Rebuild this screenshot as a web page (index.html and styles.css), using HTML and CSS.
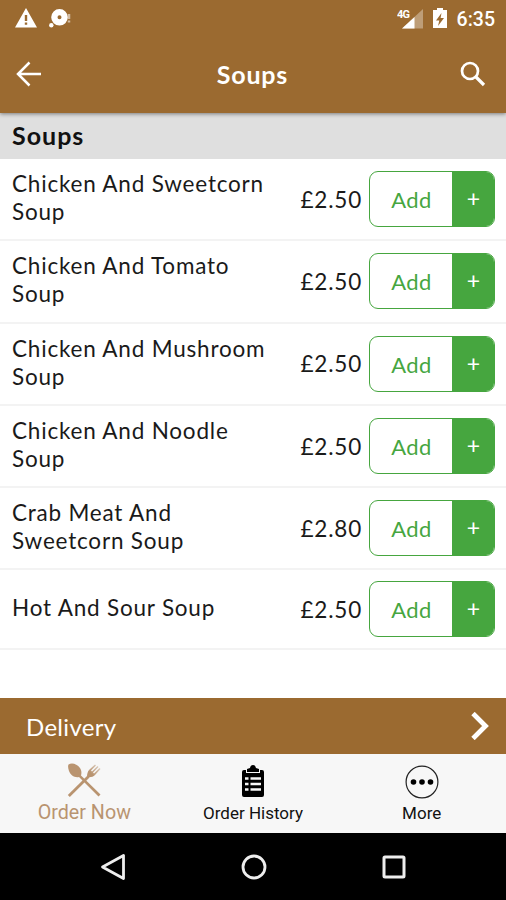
FILE: index.html
```html
<!DOCTYPE html>
<html lang="en">
<head>
<meta charset="utf-8">
<title>Soups</title>
<link rel="stylesheet" href="styles.css">
</head>
<body>
<header class="header">
  <div class="status">
    <svg class="status-warn" width="22" height="20" viewBox="0 0 22 20"><path fill="#fff" fill-rule="evenodd" d="M11 0 22 19.500H0zM9.800 7v6h2.400V7zm0 7.500v2.300h2.400v-2.300z"/></svg>
    <svg class="status-disc" width="22" height="19" viewBox="0 0 22 19"><path fill="#fff" fill-rule="evenodd" d="M10.500 0a8.300 8.300 0 1 1 0 16.600 8.300 8.300 0 0 1 0-16.600zm0 6.300a2 2 0 1 0 0 4 2 2 0 0 0 0-4z"/><circle cx="2.300" cy="16.200" r="2.200" fill="#fff"/><path d="M20 5v5m0 1.500v2" stroke="#fff" stroke-width="2.500" opacity=".55"/></svg>
    <span class="status-right">
      <svg width="28" height="22" viewBox="0 0 28 22"><path d="M26 1v19.500H5z" fill="#fff" opacity=".35"/><path d="M17.500 9v11.500H5z" fill="#fff"/><text class="net" x="0" y="9.500">4G</text></svg>
      <svg class="battery" width="14" height="21" viewBox="0 0 14 21"><path fill="#fff" fill-rule="evenodd" d="M4 0h6v2h4v18H0V2h4zM8.500 5 3 12.500h3.300L5 18l6-8H7.600z"/></svg>
      <span class="clock">6:35</span>
    </span>
  </div>
  <div class="bar">
    <svg width="26" height="26" viewBox="0 0 26 26"><path d="M25 13H2M13.500 1.500 2 13l11.500 11.500" fill="none" stroke="#fff" stroke-width="2.500"/></svg>
    <h1 class="title">Soups</h1>
    <svg width="26" height="26" viewBox="0 0 26 26"><circle cx="10" cy="10" r="8" fill="none" stroke="#fff" stroke-width="2.700"/><path d="m15.500 15.500 8.500 8.500" stroke="#fff" stroke-width="3.200"/></svg>
  </div>
</header>
<main class="menu">
  <h2 class="section">Soups</h2>
  <ul class="list">
    <li class="row"><span class="name">Chicken And Sweetcorn Soup</span><span class="price">£2.50</span><button class="add"><span class="label">Add</span><span class="plus">+</span></button></li>
    <li class="row"><span class="name">Chicken And Tomato Soup</span><span class="price">£2.50</span><button class="add"><span class="label">Add</span><span class="plus">+</span></button></li>
    <li class="row"><span class="name">Chicken And Mushroom Soup</span><span class="price">£2.50</span><button class="add"><span class="label">Add</span><span class="plus">+</span></button></li>
    <li class="row"><span class="name">Chicken And Noodle Soup</span><span class="price">£2.50</span><button class="add"><span class="label">Add</span><span class="plus">+</span></button></li>
    <li class="row"><span class="name">Crab Meat And Sweetcorn Soup</span><span class="price">£2.80</span><button class="add"><span class="label">Add</span><span class="plus">+</span></button></li>
    <li class="row row-single"><span class="name">Hot And Sour Soup</span><span class="price">£2.50</span><button class="add"><span class="label">Add</span><span class="plus">+</span></button></li>
  </ul>
</main>
<div class="delivery"><span>Delivery</span>
  <svg width="18" height="28" viewBox="0 0 18 28"><path d="m2 1.500 12.500 12.500L2 26.500" fill="none" stroke="#fff" stroke-width="4.800"/></svg>
</div>
<nav class="tabs">
  <a class="tab tab-active">
    <svg width="34" height="34" viewBox="0 0 34 34"><defs><linearGradient id="fade" x1="0" y1="1" x2="1" y2="0"><stop offset=".3" stop-color="#b99470"/><stop offset="1" stop-color="#b99470" stop-opacity=".3"/></linearGradient></defs><path fill="#b99470" d="M1.500 1.500C5-.5 10 1 13 5c1.500 2.300 1.800 5 1 7.500L33.500 31.500 31.500 33.500 12 14C7.500 15 3.500 12 2 8 1 5 .8 3 1.500 1.500z"/><path fill="#b99470" d="M.8 32 20.500 12.500l2 2L2.800 34z"/><path fill="url(#fade)" d="M20 14c0-3 .5-5.500 2.500-7.500L28 1.500l1 1-5 5 1 1L30.500 3l1 1L26 9.500l1 1L32.500 5l1 1-5.500 6c-2 2-4.500 2.500-8 2z"/></svg>
    <span>Order Now</span>
  </a>
  <a class="tab">
    <svg width="22" height="32" viewBox="0 0 22 32"><path fill="#000" d="M2 5h2v3h14V5h2q2 0 2 2v23q0 2-2 2H2q-2 0-2-2V7q0-2 2-2zM5 4l3-1q.5-3 3-3t3 3l3 1v3H5z"/><path d="M3 13.500h3.500m2 0h10.500m-16 5.500h3.500m2 0h10.500m-16 5.500h3.500m2 0h10.500" stroke="#f7f7f7" stroke-width="2.500"/></svg>
    <span>Order History</span>
  </a>
  <a class="tab">
    <svg width="34" height="34" viewBox="0 0 34 34"><circle cx="17" cy="17" r="15.900" fill="none" stroke="#222" stroke-width="1.200"/><circle cx="8.500" cy="17" r="2.800"/><circle cx="17" cy="17" r="2.800"/><circle cx="25.500" cy="17" r="2.800"/></svg>
    <span>More</span>
  </a>
</nav>
<footer class="system">
  <svg width="26" height="28" viewBox="0 0 26 28"><path d="M23.500 2.500v23L2.500 14z" fill="none" stroke="#eee" stroke-width="2.800" stroke-linejoin="round"/></svg>
  <svg width="26" height="26" viewBox="0 0 26 26"><circle cx="13" cy="13" r="11" fill="none" stroke="#eee" stroke-width="2.800"/></svg>
  <svg width="24" height="24" viewBox="0 0 24 24"><rect x="2" y="2" width="20" height="20" rx="1" fill="none" stroke="#eee" stroke-width="3"/></svg>
</footer>
</body>
</html>
```
FILE: styles.css
```css
* { box-sizing: border-box; }
body {
  margin: 0;
  height: 900px;
  display: flex;
  flex-direction: column;
  overflow: hidden;
  background: #fff;
  color: #1a1a1a;
  font-family: Lato, sans-serif;
}
svg { display: block; flex: none; }
.header {
  position: relative;
  height: 113px;
  background: #9b6a30;
  color: #fff;
  box-shadow: 0 1px 4px rgba(0, 0, 0, .45);
}
.status { display: flex; height: 37px; padding: 8px 11px 0 15px; }
.status-disc { margin: 1px 0 0 12px; }
.status-right { display: flex; margin-left: auto; }
.net { font: 700 11px Roboto, sans-serif; fill: #fff; letter-spacing: -.8px; }
.battery { margin-left: 8px; }
.clock { margin-left: 10px; font: 500 19.5px/24px Roboto, sans-serif; }
.bar {
  display: flex;
  align-items: center;
  justify-content: space-between;
  height: 76px;
  padding: 0 20px 2px 16px;
}
.title { margin: 0; padding-left: 3px; font-size: 25px; line-height: 28px; font-weight: 700; letter-spacing: .8px; }
.section {
  margin: 0;
  height: 46px;
  padding: 0 12px;
  background: #dfdfdf;
  color: #111;
  font-size: 25px;
  line-height: 44px;
  font-weight: 700;
  letter-spacing: 1px;
}
.menu { flex: 1; }
.list { margin: 0; padding: 0; list-style: none; }
.row {
  display: flex;
  align-items: center;
  height: 82.3px;
  padding: 0 11px 0 12px;
  border-bottom: 2px solid #f3f3f3;
}
.row-single { height: 80px; }
.name { width: 262px; padding-bottom: 2px; font-size: 22.500px; line-height: 28px; letter-spacing: .8px; }
.price { width: 88px; text-align: right; font-size: 22.500px; letter-spacing: .8px; }
.add {
  display: flex;
  width: 126px;
  height: 56px;
  margin-left: 7px;
  padding: 0;
  overflow: hidden;
  border: 1px solid #46a63f;
  border-radius: 9px;
  background: #fff;
  font: 22px Lato, sans-serif;
  letter-spacing: .4px;
  color: #46a63f;
}
.label { flex: 1; padding-left: 1px; line-height: 55px; }
.plus {
  width: 42px;
  padding-left: 1px;
  background: #46a63f;
  color: #fff;
  font-size: 23px;
  line-height: 52px;
}
.delivery {
  display: flex;
  align-items: center;
  justify-content: space-between;
  height: 56px;
  padding: 0 17px 0 26px;
  background: #9b6a30;
  color: #fff;
  font-size: 24px;
  letter-spacing: .3px;
}
.tabs { display: flex; height: 79px; background: #f7f7f7; }
.tab {
  flex: 1;
  display: flex;
  flex-direction: column;
  align-items: center;
  justify-content: space-between;
  padding: 11px 0 10px;
  font: 17px/20px Roboto, sans-serif;
  color: #111;
}
.tab-active { padding: 9px 0 10px; font-size: 19.700px; color: #b99470; }
.system {
  display: flex;
  align-items: center;
  justify-content: space-between;
  height: 67px;
  padding: 0 100px;
  background: #000;
}
```
